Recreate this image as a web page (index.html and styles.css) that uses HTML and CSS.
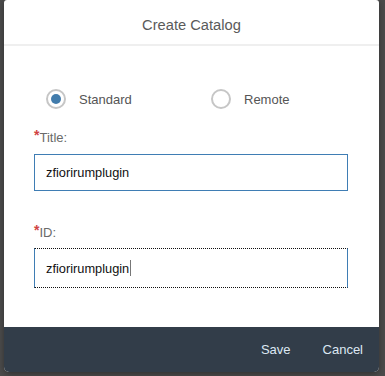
FILE: index.html
```html
<!DOCTYPE html>
<html lang="en">
<head>
<meta charset="utf-8">
<title>Create Catalog</title>
<link rel="stylesheet" href="styles.css">
</head>
<body>
<div class="dialog">
  <header class="dialog-header">
    <h1 class="dialog-title">Create Catalog</h1>
  </header>
  <main class="dialog-content">
    <div class="radio-group">
      <label class="radio">
        <span class="radio-circle selected"><span class="radio-dot"></span></span>
        <span class="radio-label">Standard</span>
      </label>
      <label class="radio">
        <span class="radio-circle"></span>
        <span class="radio-label">Remote</span>
      </label>
    </div>
    <div class="field field-title">
      <div class="field-label"><span class="req">*</span>Title:</div>
      <div class="input">zfiorirumplugin</div>
    </div>
    <div class="field field-id">
      <div class="field-label"><span class="req">*</span>ID:</div>
      <div class="input input-focused">zfiorirumplugin<span class="caret"></span></div>
    </div>
  </main>
  <footer class="dialog-footer">
    <button class="footer-btn">Save</button>
    <button class="footer-btn">Cancel</button>
  </footer>
</div>
</body>
</html>
```

FILE: styles.css
```css
html, body {
  margin: 0;
  padding: 0;
}
body {
  width: 385px;
  height: 376px;
  overflow: hidden;
  background: #4b4b4b;
  font-family: "Liberation Sans", Arial, sans-serif;
}
.dialog {
  margin-left: 4px;
  width: 375px;
  height: 372px;
  background: #ffffff;
  border-radius: 3px 3px 5px 5px;
  display: flex;
  flex-direction: column;
  overflow: hidden;
  box-shadow: 0 2px 6px rgba(0, 0, 0, 0.35);
}
.dialog-header {
  height: 44px;
  border-bottom: 2px solid #efefef;
  display: flex;
  align-items: center;
  justify-content: center;
}
.dialog-title {
  margin: 0;
  padding-top: 5px;
  font-size: 14.7px;
  font-weight: normal;
  color: #5a5a5a;
}
.dialog-content {
  padding: 43px 31px 0 30px;
}
.radio-group {
  display: flex;
  padding-left: 12px;
  height: 20px;
}
.radio {
  flex: 0 0 165px;
  display: flex;
  align-items: center;
}
.radio-circle {
  flex: 0 0 auto;
  width: 20px;
  height: 20px;
  box-sizing: border-box;
  border: 2px solid #c6c6c6;
  border-radius: 50%;
  display: flex;
  align-items: center;
  justify-content: center;
}
.radio-dot {
  width: 10px;
  height: 10px;
  border-radius: 50%;
  background: #427cac;
}
.radio-label {
  margin-left: 13px;
  font-size: 13px;
  color: #555555;
}
.field-title {
  margin-top: 21px;
}
.field-id {
  margin-top: 34px;
}
.field-label {
  font-size: 13px;
  line-height: 16px;
  color: #6a6a6a;
}
.req {
  color: #d04343;
  font-size: 14px;
  font-weight: bold;
  line-height: 0;
  position: relative;
  top: -2px;
}
.input {
  margin-top: 8px;
  height: 37px;
  box-sizing: border-box;
  border: 1px solid #3f7db4;
  padding-left: 11px;
  display: flex;
  align-items: center;
  font-size: 12.8px;
  color: #111111;
}
.field-id .input {
  margin-top: 7px;
}
.input-focused {
  height: 40px;
  border-top: 1px dotted #111111;
  border-bottom: 1px dotted #111111;
}
.caret {
  display: inline-block;
  width: 1px;
  height: 16px;
  margin-left: 1px;
  background: #777777;
}
.dialog-footer {
  margin-top: auto;
  height: 45px;
  background: #323d49;
  display: flex;
  justify-content: flex-end;
  align-items: center;
}
.footer-btn {
  background: none;
  border: none;
  padding: 0 16px;
  height: 45px;
  font-family: "Liberation Sans", Arial, sans-serif;
  font-size: 13px;
  color: #dde8f3;
  cursor: pointer;
}
```
